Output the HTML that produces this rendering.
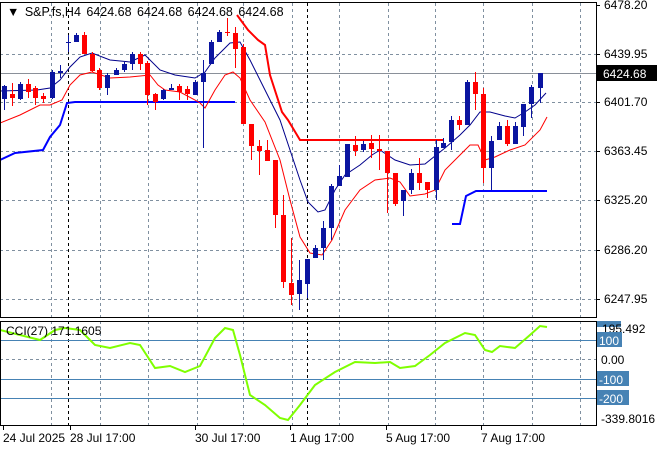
<!DOCTYPE html>
<html><head><meta charset="utf-8"><style>
html,body{margin:0;padding:0;background:#fff;width:660px;height:450px;overflow:hidden}
svg{display:block;font-family:"Liberation Sans",sans-serif;font-size:12px}
</style></head><body>
<svg id="s" width="660" height="450" xmlns="http://www.w3.org/2000/svg">
<g id="grid" stroke="#8090a0" stroke-dasharray="3,3" stroke-width="1"></g>
<line x1="0" y1="73.5" x2="596" y2="73.5" stroke="#8a9099"/>
<g id="lines" fill="none"></g>
<g id="candles"></g>
<rect x="0.5" y="2.5" width="596" height="315" fill="none" stroke="#000"/>
<rect x="0.5" y="321.5" width="596" height="104" fill="none" stroke="#000"/>
<g id="txt" fill="#000"></g>
<text x="7" y="16" fill="#000" style="font-size:12.5px;word-spacing:2px">▼ S&amp;P.fs,H4  6424.68 6424.68 6424.68 6424.68</text>
<text x="6" y="335" fill="#000">CCI(27) 171.1605</text>
</svg>
<script>
var NS="http://www.w3.org/2000/svg",s=document.getElementById('s');
function el(p,t,a,tx){var e=document.createElementNS(NS,t);for(var k in a)e.setAttribute(k,a[k]);if(tx!=null)e.textContent=tx;document.getElementById(p).appendChild(e);return e;}
var g='grid';
[54,102,151,200,250,299].forEach(function(y){el(g,'line',{x1:0,x2:596,y1:y+.5,y2:y+.5});});
[51,100,148,197,243,292,339,388,435,483,532,580].forEach(function(x){el(g,'line',{x1:x+.5,x2:x+.5,y1:3,y2:425});});
el(g,'line',{x1:0,x2:596,y1:359.5,y2:359.5});
[68,307].forEach(function(x){el(g,'line',{x1:x+.5,x2:x+.5,y1:3,y2:425,stroke:'#000'});});
[340,379,398].forEach(function(y){el('lines','line',{x1:0,x2:596,y1:y+.5,y2:y+.5,stroke:'#4682b4'});});
function pl(pts,c,w){el('lines','polyline',{points:pts,stroke:c,'stroke-width':w});}
pl("237,15 248,30 258,40 265,45 270,75 282,112 288,120 300,140 443,140","#f00",2);
pl("0,160 15,153 43,150 50,137 60,125 67,103 75,102 235,102","#00f",2);
pl("452,224 460,224 466,196 476,191 547,191","#00f",2);
pl("0,91 37,90 50,88 60,80 70,67 80,57 92,53 110,60 130,62 145,55 160,70 175,75 195,78 205,72 215,58 230,43 240,42 250,60 265,90 280,120 300,180 308,202 318,212 325,210 335,190 345,175 360,165 372,155 380,150 395,160 410,165 425,164 445,148 460,135 470,125 480,112 490,112 505,116 515,118 525,112 535,105 546,93","#00008b",1);
pl("0,123 20,115 40,105 50,105 62,100 70,85 80,75 92,72 110,78 130,77 150,75 158,85 165,90 180,92 195,100 200,103 205,108 215,90 225,75 233,72 240,78 250,100 265,122 280,160 290,200 300,237 310,253 322,255 332,240 345,210 360,190 375,180 390,178 400,182 410,196 425,194 435,190 445,170 460,155 470,145 478,145 485,160 495,157 510,150 525,145 540,130 547,117","#f00",1);
pl("0,330 20,335 40,340 55,330 65,328 80,330 95,345 110,348 130,343 140,345 155,368 170,366 185,372 200,366 215,338 225,328 233,330 240,355 250,395 265,405 280,418 288,420 300,405 315,385 335,372 355,362 375,363 390,362 400,368 415,366 430,355 445,343 465,333 475,335 485,350 492,352 500,346 515,348 530,335 540,326 547,327","#7fff00",2);
var C=[[4,'b',86,99,85,110],[12,'r',94,98,83,106],[20,'b',84,99,82,100],[28,'r',84,92,79,98],[35,'r',88,98,86,105],[43,'r',96,99,93,103],[52,'b',72,98,70,99],[60,'b',71,73,65,78],[68,'b',42,43,35,52],[76,'b',35,42,33,42],[84,'r',35,54,32,54],[92,'r',54,71,52,72],[99,'r',70,88,68,90],[107,'b',75,88,73,95],[116,'b',70,75,68,75],[124,'b',64,70,62,72],[132,'b',54,64,52,70],[140,'r',54,64,52,70],[147,'r',63,95,61,105],[155,'r',94,102,93,110],[163,'b',90,99,89,100],[171,'b',88,90,84,90],[179,'r',86,92,84,100],[187,'r',89,94,86,100],[195,'b',82,95,80,95],[203,'b',73,82,60,148],[211,'b',42,64,40,64],[219,'b',32,42,30,42],[227,'r',32,33,18,36],[235,'r',33,49,27,68],[243,'r',47,124,44,124],[251,'r',124,146,124,160],[259,'r',146,151,140,175],[267,'r',150,161,140,160],[275,'r',160,215,160,228],[283,'r',215,282,195,288],[291,'r',283,295,238,305],[299,'b',280,294,260,310],[307,'b',259,284,259,298],[315,'b',248,258,245,258],[323,'b',228,248,221,260],[331,'b',186,228,184,240],[339,'b',176,186,165,186],[347,'b',144,177,144,177],[355,'r',145,151,136,156],[363,'b',144,150,141,152],[371,'r',143,149,135,158],[379,'r',149,151,135,170],[387,'r',151,173,151,213],[395,'r',173,204,173,206],[403,'b',190,201,190,216],[411,'b',173,190,169,194],[419,'r',173,183,158,190],[427,'r',182,190,182,198],[436,'b',147,190,140,200],[443,'b',143,148,138,148],[451,'b',120,142,116,150],[459,'r',120,125,116,130],[467,'b',82,125,80,125],[475,'r',82,94,72,110],[483,'r',94,168,88,183],[491,'b',141,168,136,190],[499,'b',126,140,122,140],[507,'r',126,144,120,146],[515,'b',126,144,122,137],[523,'b',104,127,104,136],[531,'b',87,104,85,118],[540,'b',73,88,73,103]];
C.forEach(function(c){var col=c[1]=='b'?'#0a14a0':'#f00';
el('candles','line',{x1:c[0]+.5,x2:c[0]+.5,y1:c[4],y2:c[5],stroke:col});
el('candles','rect',{x:c[0]-2,y:c[2],width:5,height:Math.max(1,c[3]-c[2]),fill:col});});
var t='txt';
[[5,'6478.20'],[54,'6439.95'],[102,'6401.70'],[151,'6363.45'],[200,'6325.20'],[250,'6286.20'],[299,'6247.95']].forEach(function(a){el(t,'line',{x1:596,x2:600,y1:a[0]+.5,y2:a[0]+.5,stroke:'#000'});el(t,'text',{x:604,y:a[0]+4},a[1]);});
el(t,'rect',{x:597,y:65,width:60,height:16,fill:'#000'});
el(t,'text',{x:603,y:78,fill:'#fff'},'6424.68');
el(t,'rect',{x:597,y:321,width:24,height:6,fill:'#4682b4'});
el(t,'text',{x:602,y:333},'195.492');
[[340,'100'],[379,'-100'],[398,'-200']].forEach(function(a){el(t,'rect',{x:597,y:a[0]-8,width:a[1].length*7+4,height:15,fill:'#4682b4'});el(t,'text',{x:599,y:a[0]+5,fill:'#fff'},a[1]);});
el(t,'text',{x:601,y:364},'0.00');
el(t,'text',{x:601,y:423},'-339.8016');
[[3,'24 Jul 2025'],[70,'28 Jul 17:00'],[195,'30 Jul 17:00'],[290,'1 Aug 17:00'],[386,'5 Aug 17:00'],[481,'7 Aug 17:00']].forEach(function(a){el(t,'line',{x1:a[0]+.5,x2:a[0]+.5,y1:426,y2:430,stroke:'#000'});el(t,'text',{x:a[0],y:442},a[1]);});
</script>
</body></html>
